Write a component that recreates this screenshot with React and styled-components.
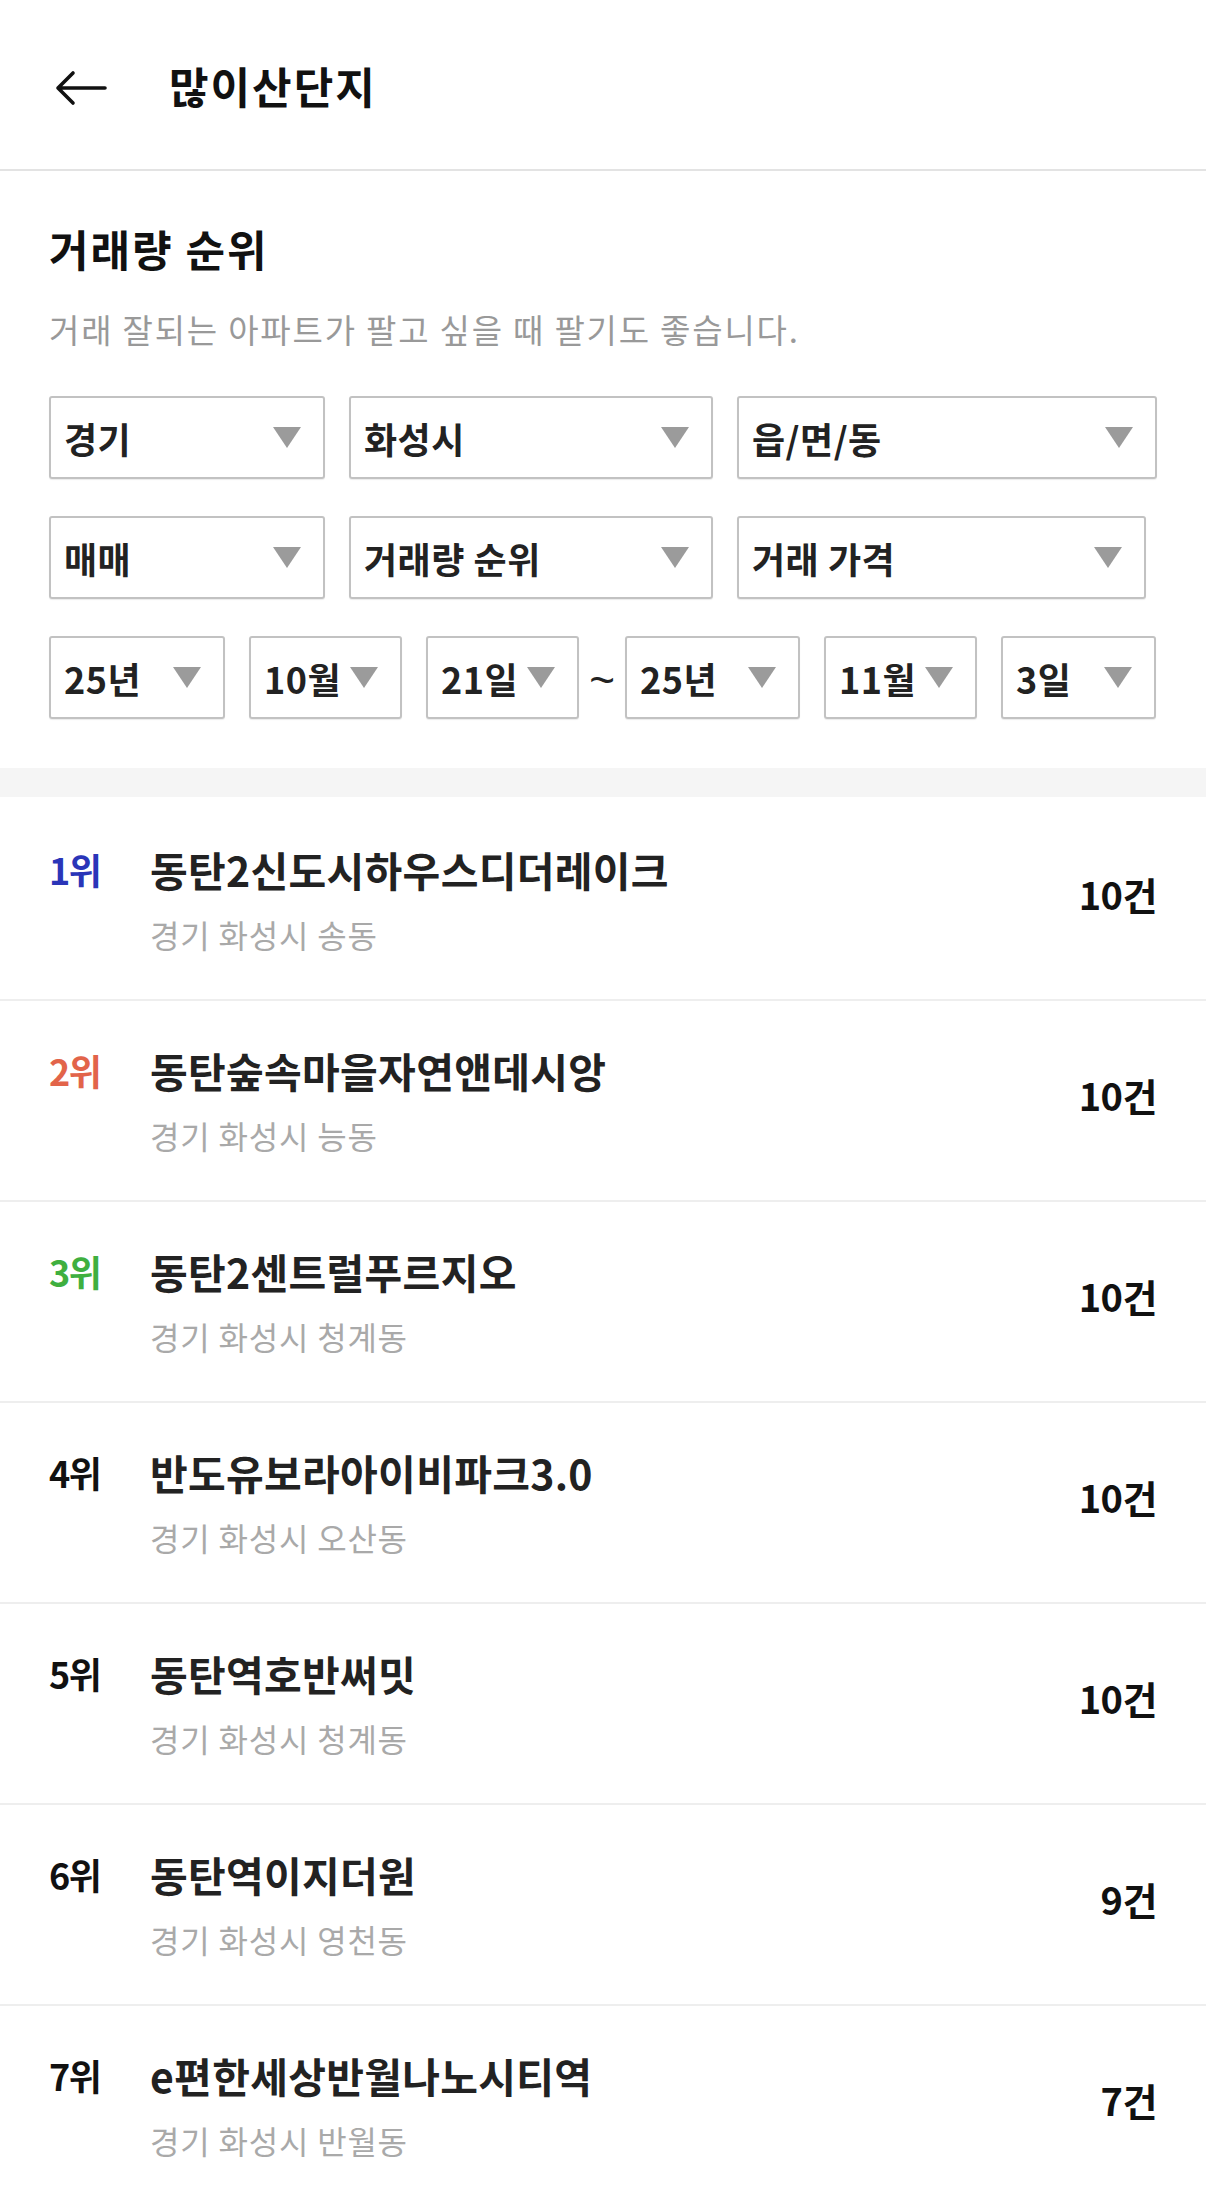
import styled, { createGlobalStyle } from "styled-components";

const GlobalStyle = createGlobalStyle`
  body {
    margin: 0;
    background: #fff;
    font-family: "Noto Sans CJK KR", "Noto Sans", sans-serif;
    color: #222;
  }
`;

const filterRows = [
  [
    { label: "경기", width: 276 },
    { label: "화성시", width: 364 },
    { label: "읍/면/동", width: 420 },
  ],
  [
    { label: "매매", width: 276 },
    { label: "거래량 순위", width: 364 },
    { label: "거래 가격", width: 409 },
  ],
];

const dateFrom = [
  { label: "25년", width: 176 },
  { label: "10월", width: 153 },
  { label: "21일", width: 153 },
];

const dateTo = [
  { label: "25년", width: 175 },
  { label: "11월", width: 153 },
  { label: "3일", width: 155 },
];

const rankColors = { 1: "#2a35b8", 2: "#e2644a", 3: "#3faf3f" };

const items = [
  { name: "동탄2신도시하우스디더레이크", area: "경기 화성시 송동", count: 10 },
  { name: "동탄숲속마을자연앤데시앙", area: "경기 화성시 능동", count: 10 },
  { name: "동탄2센트럴푸르지오", area: "경기 화성시 청계동", count: 10 },
  { name: "반도유보라아이비파크3.0", area: "경기 화성시 오산동", count: 10 },
  { name: "동탄역호반써밋", area: "경기 화성시 청계동", count: 10 },
  { name: "동탄역이지더원", area: "경기 화성시 영천동", count: 9 },
  { name: "e편한세상반월나노시티역", area: "경기 화성시 반월동", count: 7 },
];

const Select = ({ label, width }) => (
  <Box $width={width}>
    <BoxLabel>{label}</BoxLabel>
    <Caret />
  </Box>
);

const App = () => {
  return (
    <>
      <GlobalStyle />
      <Header>
        <BackButton aria-label="뒤로">
          <svg width="52" height="40" viewBox="0 0 52 40">
            <path
              d="M3 20 H50 M3 20 L18 5 M3 20 L18 35"
              stroke="#111"
              strokeWidth="3.6"
              fill="none"
              strokeLinecap="round"
              strokeLinejoin="round"
            />
          </svg>
        </BackButton>
        <HeaderTitle>많이산단지</HeaderTitle>
      </Header>

      <FilterSection>
        <SectionTitle>거래량 순위</SectionTitle>
        <SectionDesc>거래 잘되는 아파트가 팔고 싶을 때 팔기도 좋습니다.</SectionDesc>

        <Rows>
          {filterRows.map((row, i) => (
            <Row key={i}>
              {row.map((f) => (
                <Select key={f.label} {...f} />
              ))}
            </Row>
          ))}
          <Row>
            {dateFrom.map((f) => (
              <Select key={"from" + f.label} {...f} />
            ))}
            <Tilde>~</Tilde>
            {dateTo.map((f) => (
              <Select key={"to" + f.label} {...f} />
            ))}
          </Row>
        </Rows>
      </FilterSection>

      <Band />

      <List>
        {items.map((item, i) => (
          <Item key={item.name}>
            <Rank $color={rankColors[i + 1]}>{i + 1}위</Rank>
            <Name>{item.name}</Name>
            <Count>{item.count}건</Count>
            <Area>{item.area}</Area>
          </Item>
        ))}
      </List>
    </>
  );
};

const Header = styled.header`
  height: 169px;
  display: flex;
  align-items: center;
  padding-left: 55px;
  border-bottom: 2px solid #e3e3e3;
  box-sizing: content-box;
`;

const BackButton = styled.button`
  border: none;
  background: none;
  padding: 0;
  width: 52px;
  height: 40px;
  display: flex;
  margin-top: 6px;
`;

const HeaderTitle = styled.h1`
  margin: 0 0 0 62px;
  font-size: 43px;
  font-weight: 700;
  letter-spacing: 2px;
  color: #111;
`;

const FilterSection = styled.section`
  padding: 52px 49px 49px;
`;

const SectionTitle = styled.h2`
  margin: 0;
  font-size: 43px;
  line-height: 50px;
  font-weight: 700;
  color: #111;
  letter-spacing: 2px;
`;

const SectionDesc = styled.p`
  margin: 36px 0 0;
  font-size: 33px;
  line-height: 40px;
  color: #999;
  letter-spacing: 1.8px;
`;

const Rows = styled.div`
  margin-top: 47px;
  display: flex;
  flex-direction: column;
  gap: 37px;
`;

const Row = styled.div`
  display: flex;
  align-items: center;
  gap: 24px;
`;

const Box = styled.div`
  width: ${(p) => p.$width}px;
  height: 83px;
  box-sizing: border-box;
  border: 2px solid #c2c2c2;
  border-radius: 3px;
  box-shadow: 0 1px 1px rgba(0, 0, 0, 0.08);
  display: flex;
  align-items: center;
  justify-content: space-between;
  padding: 0 22px 0 13px;
`;

const BoxLabel = styled.span`
  font-size: 36px;
  font-weight: 700;
  color: #222;
  letter-spacing: 0.5px;
  white-space: nowrap;
`;

const Caret = styled.span`
  width: 0;
  height: 0;
  border-left: 14px solid transparent;
  border-right: 14px solid transparent;
  border-top: 21px solid #9b9b9b;
  flex-shrink: 0;
`;

const Tilde = styled.span`
  width: 0;
  margin: 0 -1px;
  display: flex;
  justify-content: center;
  font-family: "Liberation Sans", sans-serif;
  font-size: 44px;
  color: #222;
  margin-top: 4px;
`;

const Band = styled.div`
  height: 29px;
  background: #f5f5f5;
`;

const List = styled.ul`
  list-style: none;
  margin: 0;
  padding: 3px 0 0;
`;

const Item = styled.li`
  height: 199px;
  box-sizing: content-box;
  border-bottom: 2px solid #eeeeee;
  padding: 0 49px;
  display: grid;
  grid-template-columns: 101px 1fr auto;
  grid-template-rows: 48px 40px;
  row-gap: 21px;
  align-content: center;
  & > * {
    position: relative;
    top: 0;
  }
`;

const Rank = styled.span`
  font-size: 36px;
  line-height: 48px;
  font-weight: 700;
  color: ${(p) => p.$color || "#111"};
  letter-spacing: -1.5px;
`;

const Name = styled.span`
  font-size: 41px;
  line-height: 48px;
  font-weight: 700;
  color: #222;
  letter-spacing: 0.3px;
  white-space: nowrap;
`;

const Count = styled.span`
  grid-row: 1 / span 2;
  grid-column: 3;
  align-self: center;
  font-size: 38px;
  font-weight: 700;
  color: #111;
  letter-spacing: -0.5px;
  top: -6px;
`;

const Area = styled.span`
  grid-column: 2;
  font-size: 32px;
  line-height: 40px;
  color: #a9a9a9;
  letter-spacing: 0.8px;
`;

export default App;
